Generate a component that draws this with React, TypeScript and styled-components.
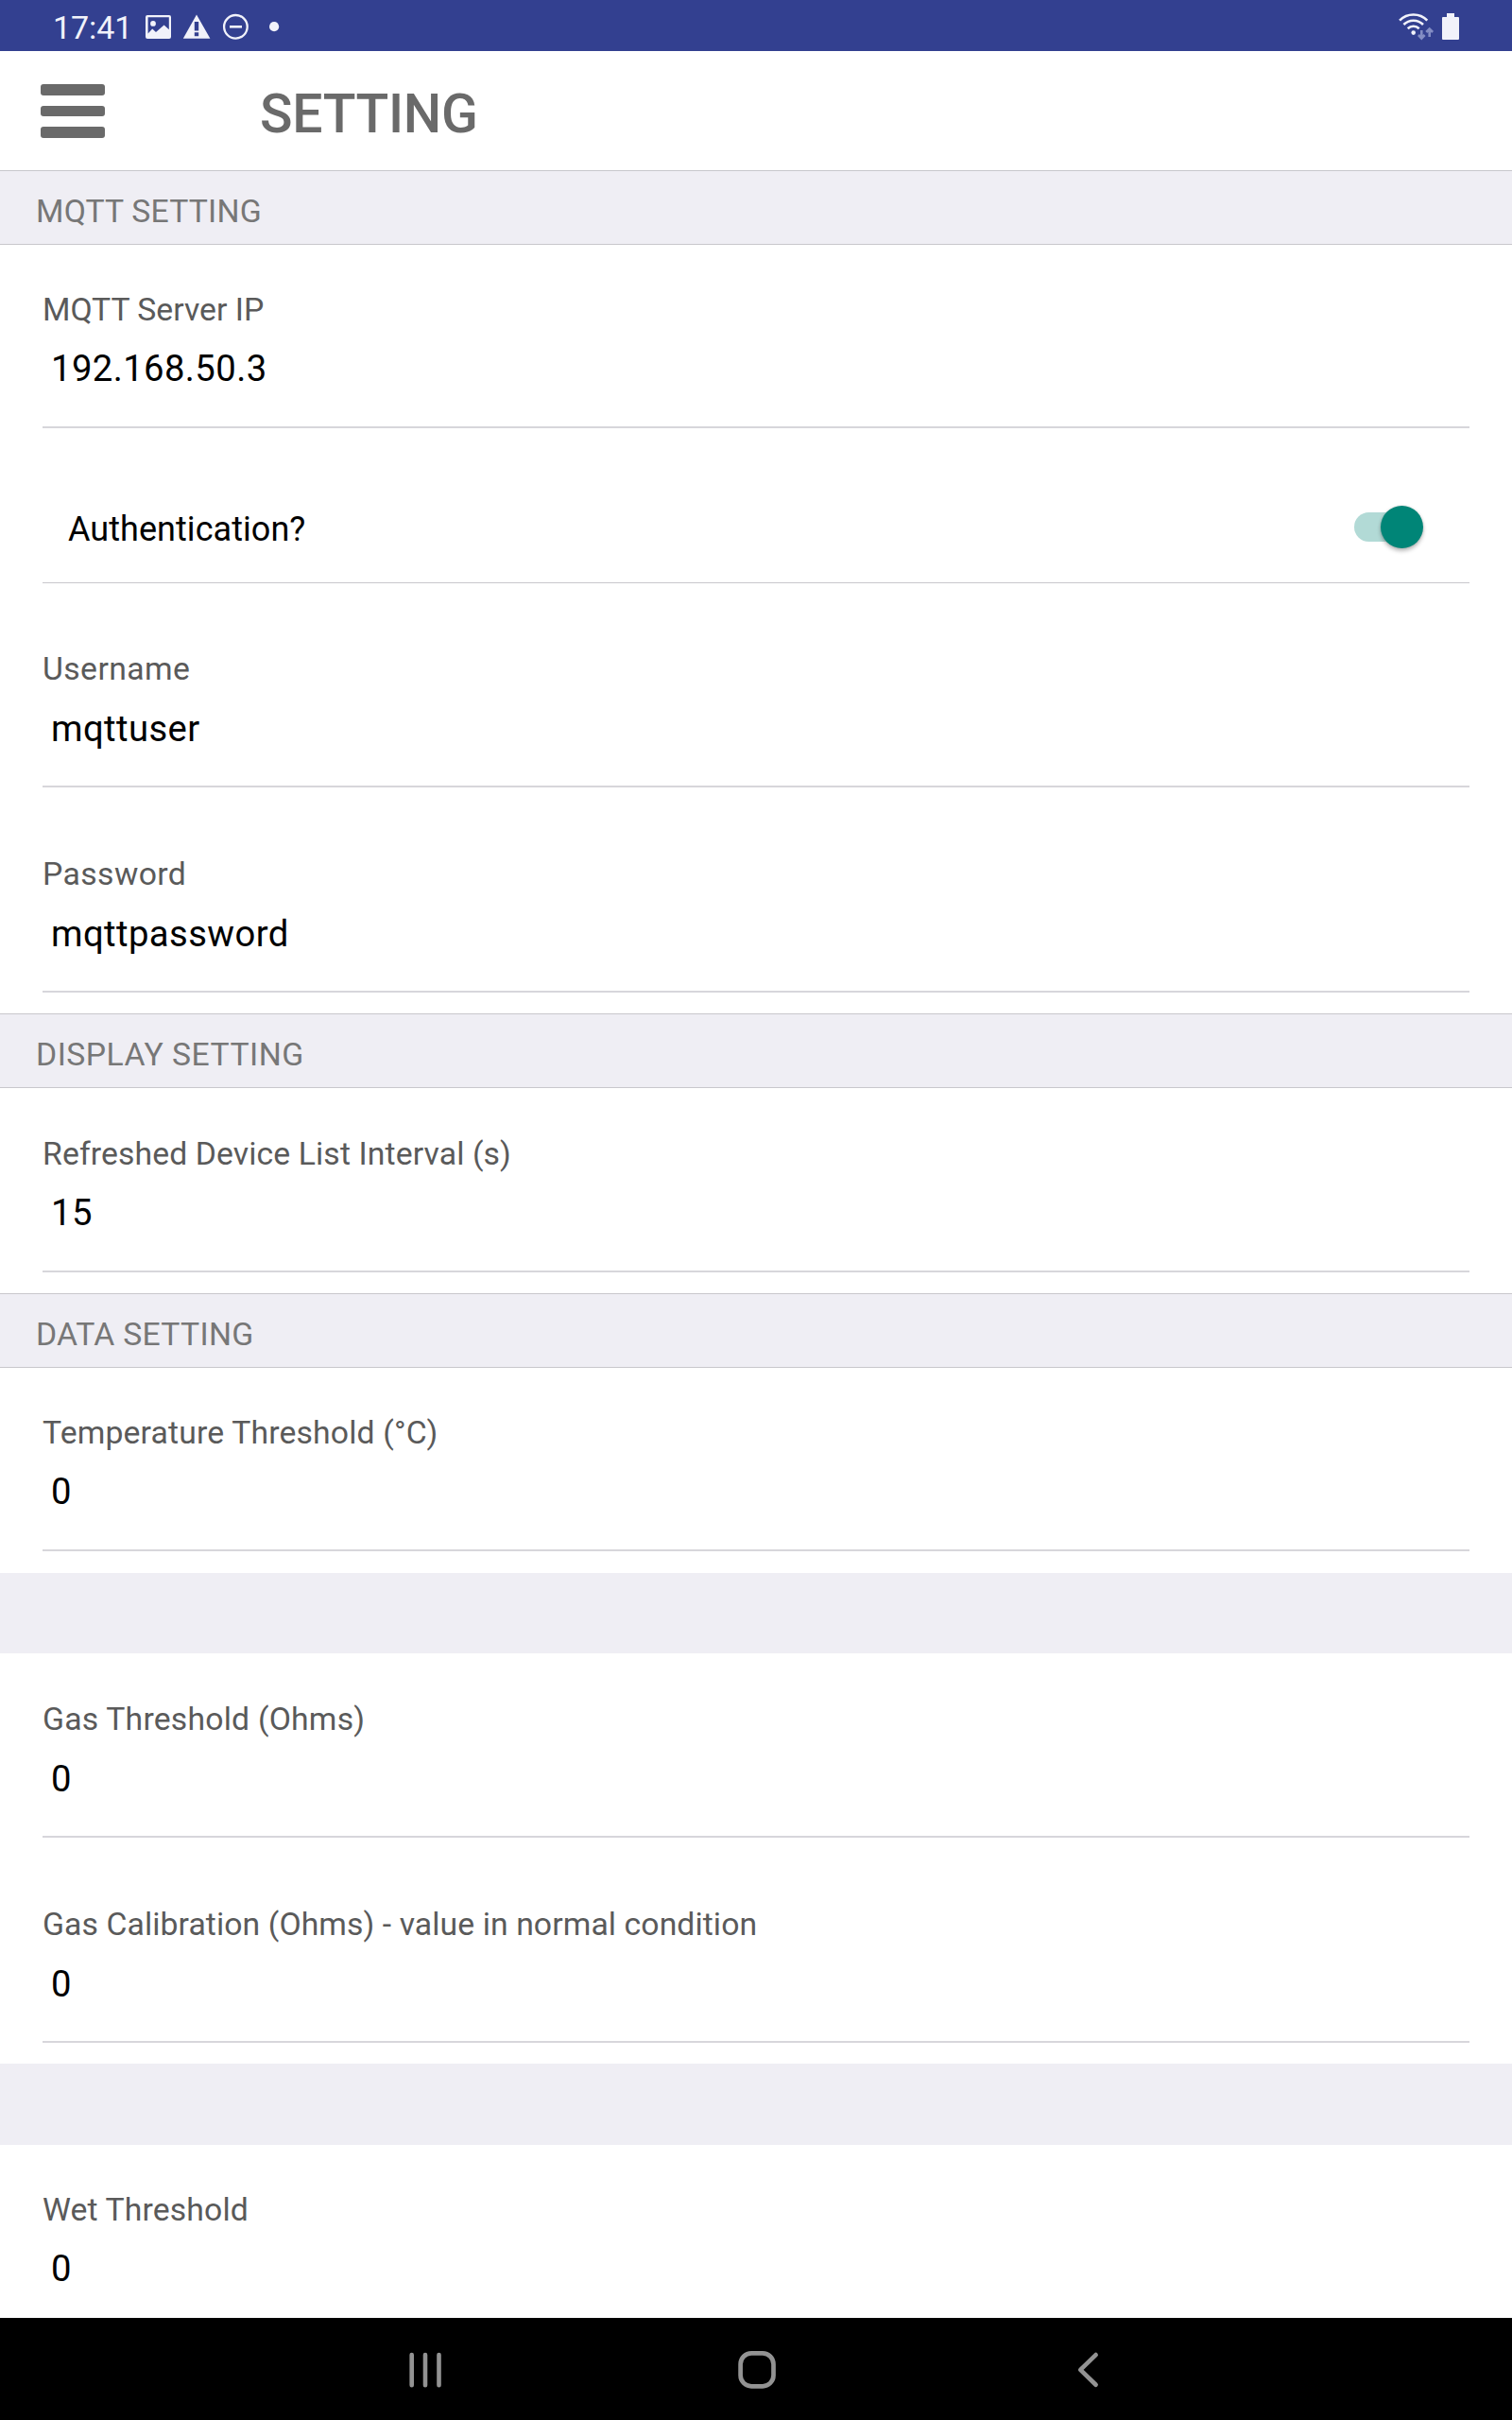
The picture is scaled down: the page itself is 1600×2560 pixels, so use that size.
import React from "react";
import styled, { createGlobalStyle } from "styled-components";

const GlobalStyle = createGlobalStyle`
  * { box-sizing: border-box; }
  body { margin: 0; background: #fff; font-family: Roboto, "Noto Sans", sans-serif; }
`;

const Screen = styled.main`
  width: 1600px;
  height: 2560px;
  display: flex;
  flex-direction: column;
  overflow: hidden;
  background: #fff;
`;

const StatusBar = styled.header`
  height: 54px;
  flex: none;
  display: flex;
  align-items: center;
  justify-content: space-between;
  background: #334090;
  color: #f1f2fa;
`;

const StatusGroup = styled.div`
  height: 54px;
  display: flex;
  align-items: center;
`;

const Clock = styled.time`
  width: 150px;
  padding: 4px 0 0 56px;
  font-size: 34px;
  line-height: 40px;
  letter-spacing: -0.1px;
`;

const TitleBar = styled.div`
  height: 126px;
  flex: none;
  display: flex;
  padding: 0 43px;
`;

const MenuButton = styled.button`
  width: 68px;
  height: 57px;
  margin-top: 35px;
  padding: 0;
  border: 0;
  background: none;
  display: flex;
  flex-direction: column;
  gap: 11px;
`;

const MenuBar = styled.span`
  height: 11.7px;
  border-radius: 3px;
  background: #6a6a6a;
`;

const Title = styled.h1`
  margin: 33px 0 0 164px;
  font-size: 57px;
  line-height: 68px;
  letter-spacing: -0.3px;
  font-weight: 500;
  color: #6a6a6a;
`;

const Content = styled.div`
  height: 2272px;
  flex: none;
  overflow: hidden;
`;

const SectionHeader = styled.h2<{ $tracking: number }>`
  height: 79px;
  margin: 0;
  padding: 23px 38px 0;
  border: solid #c8c7cc;
  border-width: 1px 0;
  background: #efeef4;
  color: #777;
  font-size: 33.75px;
  line-height: 40px;
  letter-spacing: ${(p) => p.$tracking}px;
  font-weight: 400;
`;

const Spacer = styled.div<{ $height: number }>`
  height: ${(p) => p.$height}px;
  background: #efeef4;
`;

const Item = styled.div<{ $lead: number; $trail: number }>`
  padding: ${(p) => p.$lead}px 45px ${(p) => p.$trail}px;
`;

const Label = styled.label<{ $tracking: number }>`
  display: block;
  height: 40px;
  font-size: 33.75px;
  line-height: 40px;
  letter-spacing: ${(p) => p.$tracking}px;
  color: #5a5a5a;
`;

const Value = styled.div<{ $drop: number }>`
  height: 105px;
  padding: ${(p) => p.$drop}px 9px 0;
  border-bottom: 2px solid #d7d6db;
  font-size: 38.25px;
  line-height: 46px;
  letter-spacing: 0.4px;
  color: #000;
`;

const SwitchRow = styled.div`
  height: 141px;
  margin: 0 45px 22px;
  padding: 22px 55px 0 27px;
  border-bottom: 1px solid #c8c7cc;
  display: flex;
  align-items: center;
  justify-content: space-between;
`;

const SwitchLabel = styled.span`
  padding-top: 6px;
  font-size: 36px;
  line-height: 42px;
  letter-spacing: 0.05px;
  color: #000;
`;

const Track = styled.div`
  width: 67px;
  height: 31px;
  border-radius: 16px;
  background: #b2dad6;
  display: flex;
  align-items: center;
  justify-content: flex-end;
`;

const Thumb = styled.div`
  width: 45px;
  height: 45px;
  flex: none;
  margin-right: -6px;
  border-radius: 50%;
  background: #008577;
  box-shadow: 0 3px 4px rgba(0, 0, 0, 0.26), 0 0 3px rgba(0, 0, 0, 0.14);
`;

const NavBar = styled.nav`
  height: 108px;
  flex: none;
  display: flex;
  gap: 301px;
  align-items: center;
  padding: 2px 0 0 425px;
  background: #000;
`;

function StatusIcons() {
  return (
    <svg width="150" height="54" viewBox="150 0 150 54" fill="currentColor">
      <path
        fillRule="evenodd"
        d="M156 16h23a2 2 0 0 1 2 2v21a2 2 0 0 1-2 2h-23a2 2 0 0 1-2-2V18a2 2 0 0 1 2-2zm.6 2.2v17.2l4.6-4.8 3.8 3.4 8.6-7.6 5.2 4.8V18.2zM162 22a2.900 2.900 0 1 1 0 5.800a2.900 2.900 0 1 1 0-5.800z"
      />
      <path
        fillRule="evenodd"
        d="M208 15.500l14.400 25.200h-28.600zM205.800 23v9.500h4.400V23zM205.800 34.200v4h4.400v-4z"
      />
      <circle cx="249.400" cy="28.300" r="12.300" fill="none" stroke="currentColor" strokeWidth="2.300" />
      <rect x="243" y="27" width="13" height="2.600" />
      <circle cx="290.100" cy="28.200" r="5.100" />
    </svg>
  );
}

function SignalIcons() {
  return (
    <svg width="125" height="54" viewBox="1475 0 125 54" fill="currentColor">
      <g fill="none" stroke="currentColor" strokeWidth="2.600">
        <path d="M1481.100 21.600a20.500 20.500 0 0 1 29.200 0" />
        <path d="M1485.400 26a14.500 14.500 0 0 1 20.600 0" />
        <path d="M1489.700 30.200a8.600 8.600 0 0 1 12 0" />
      </g>
      <circle cx="1495.700" cy="34.600" r="2.300" />
      <g fill="none" stroke="#838dc4" strokeWidth="2.600">
        <path d="M1504.300 32v8M1501 37l3.300 3.500 3.300-3.500" />
        <path d="M1512.700 39v-8M1509.300 34l3.400-3.500 3.400 3.500" />
      </g>
      <path d="M1531 14h8v4h4a1 1 0 0 1 1 1v22a1 1 0 0 1-1 1h-16a1 1 0 0 1-1-1V19a1 1 0 0 1 1-1h4z" />
    </svg>
  );
}

interface FieldProps {
  label: string;
  value: string;
  tracking?: number;
  lead?: number;
  trail?: number;
  drop?: number;
}

function Field({ label, value, tracking = 0.1, lead = 49, trail = 22, drop = 19 }: FieldProps) {
  return (
    <Item $lead={lead} $trail={trail}>
      <Label $tracking={tracking}>{label}</Label>
      <Value $drop={drop}>{value}</Value>
    </Item>
  );
}

export default function App() {
  return (
    <Screen>
      <GlobalStyle />
      <StatusBar>
        <StatusGroup>
          <Clock>17:41</Clock>
          <StatusIcons />
        </StatusGroup>
        <StatusGroup>
          <SignalIcons />
        </StatusGroup>
      </StatusBar>
      <TitleBar>
        <MenuButton aria-label="Menu">
          <MenuBar />
          <MenuBar />
          <MenuBar />
        </MenuButton>
        <Title>SETTING</Title>
      </TitleBar>
      <Content>
        <SectionHeader $tracking={0.2}>MQTT SETTING</SectionHeader>
        <Field label="MQTT Server IP" value="192.168.50.3" tracking={0} trail={23} />
        <SwitchRow>
          <SwitchLabel>Authentication?</SwitchLabel>
          <Track role="switch" aria-checked="true">
            <Thumb />
          </Track>
        </SwitchRow>
        <Field label="Username" value="mqttuser" tracking={0.4} drop={20} />
        <Field label="Password" value="mqttpassword" tracking={0.4} lead={50} drop={20} />
        <SectionHeader $tracking={0.48}>DISPLAY SETTING</SectionHeader>
        <Field label="Refreshed Device List Interval (s)" value="15" lead={50} />
        <SectionHeader $tracking={0.27}>DATA SETTING</SectionHeader>
        <Field label="Temperature Threshold (°C)" value="0" tracking={0.15} trail={23} />
        <Spacer $height={85} />
        <Field label="Gas Threshold (Ohms)" value="0" tracking={0.2} lead={50} drop={20} />
        <Field label="Gas Calibration (Ohms) - value in normal condition" value="0" tracking={0.08} lead={50} drop={20} />
        <Spacer $height={86} />
        <Field label="Wet Threshold" value="0" tracking={0.12} />
      </Content>
      <NavBar>
        <svg width="50" height="50" viewBox="0 0 50 50" stroke="#939393" strokeWidth="4.600" strokeLinecap="round">
          <path d="M10.700 9v32.200M25 9v32.200M39.500 9v32.200" />
        </svg>
        <svg width="50" height="50" viewBox="0 0 50 50" fill="none" stroke="#939393" strokeWidth="4.700">
          <rect x="7.600" y="7.400" width="34.900" height="34.900" rx="11.500" />
        </svg>
        <svg width="50" height="50" viewBox="0 0 50 50" fill="none" stroke="#939393" strokeWidth="4.700" strokeLinecap="round" strokeLinejoin="round">
          <path d="M32.600 9.100L16.300 24.900 32.600 40.700" />
        </svg>
      </NavBar>
    </Screen>
  );
}
